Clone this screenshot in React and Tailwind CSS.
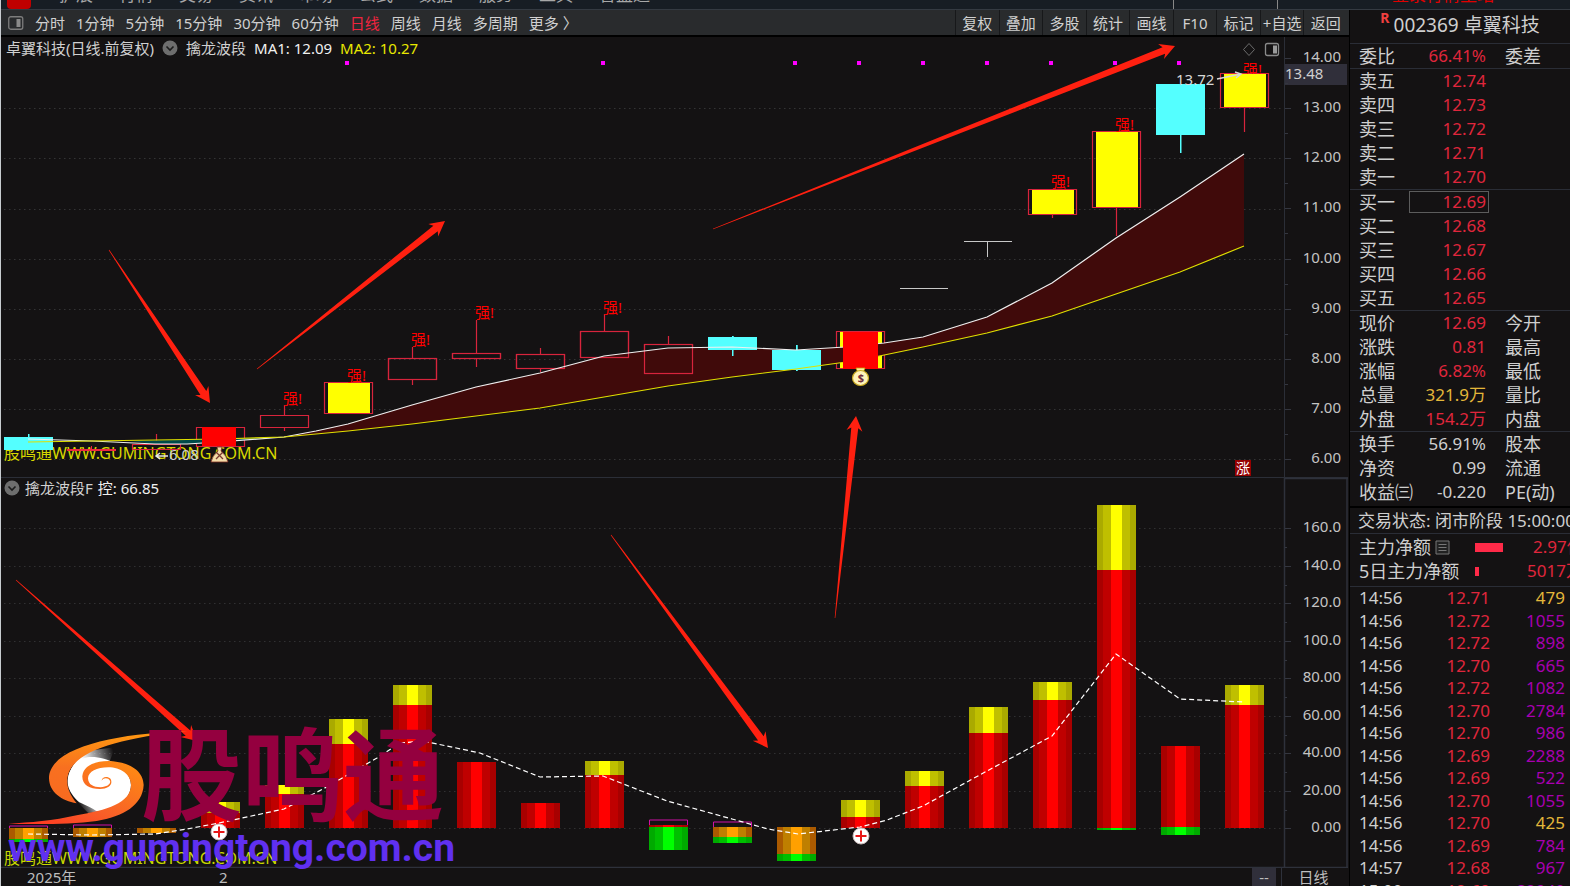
const FONT = "font-['Noto_Sans','Noto_Sans_CJK_SC',sans-serif]";

const menuItems = ["扩展", "行情", "交易", "资讯", "市场", "公式", "数据", "服务", "工具", "智盈通"];

const periods = ["分时", "1分钟", "5分钟", "15分钟", "30分钟", "60分钟", "日线", "周线", "月线", "多周期", "更多 〉"];

const actions = ["复权", "叠加", "多股", "统计", "画线", "F10", "标记", "+自选", "返回"];

const sells = [
  ["卖五", "12.74"],
  ["卖四", "12.73"],
  ["卖三", "12.72"],
  ["卖二", "12.71"],
  ["卖一", "12.70"],
];

const buys = [
  ["买一", "12.69"],
  ["买二", "12.68"],
  ["买三", "12.67"],
  ["买四", "12.66"],
  ["买五", "12.65"],
];

const quotes = [
  ["现价", "12.69", "今开", "text-[#e0263c]"],
  ["涨跌", "0.81", "最高", "text-[#e0263c]"],
  ["涨幅", "6.82%", "最低", "text-[#e0263c]"],
  ["总量", "321.9万", "量比", "text-[#e3b73a]"],
  ["外盘", "154.2万", "内盘", "text-[#e0263c]"],
];

const basics = [
  ["换手", "56.91%", "股本"],
  ["净资", "0.99", "流通"],
  ["收益㈢", "-0.220", "PE(动)"],
];

const ticks = [
  ["14:56", "12.71", "479"],
  ["14:56", "12.72", "1055"],
  ["14:56", "12.72", "898"],
  ["14:56", "12.70", "665"],
  ["14:56", "12.72", "1082"],
  ["14:56", "12.70", "2784"],
  ["14:56", "12.70", "986"],
  ["14:56", "12.69", "2288"],
  ["14:56", "12.69", "522"],
  ["14:56", "12.70", "1055"],
  ["14:56", "12.70", "425"],
  ["14:56", "12.69", "784"],
  ["14:57", "12.68", "967"],
  ["15:00", "12.69", "32940"],
];

const STEP = 64;
const center = (i) => 28 + STEP * i;

// kind, body top, body bottom, wick top, wick bottom
const candles = [
  ["down", 437, 450, 434, 450],
  ["flat", 450, 451, 446, 451],
  ["up", 444, 449, 434, 449],
  ["red", 427, 446, 427, 446],
  ["up", 415, 427, 405, 431],
  ["strong", 382, 413, 382, 413],
  ["up", 358, 379, 347, 385],
  ["up", 353, 358, 320, 367],
  ["up", 354, 368, 348, 372],
  ["up", 331, 357, 314, 370],
  ["up", 344, 373, 336, 373],
  ["down", 337, 350, 336, 356],
  ["down", 350, 370, 345, 371],
  ["signal", 331, 368, 331, 368],
  ["line", 288, 288, 288, 288],
  ["line", 241, 241, 241, 257],
  ["strong", 189, 214, 189, 218],
  ["strong", 131, 207, 131, 236],
  ["down", 84, 135, 84, 153],
  ["strong", 73, 107, 73, 132],
];

const marks = [[4, 399], [5, 376], [6, 340], [7, 313], [9, 308], [16, 182], [17, 125], [19, 70]];
const dots = [5, 9, 12, 13, 14, 15, 16, 17, 18];

const ma1 =
  "28,439 92,441 155,444 187,444 219,442 284,437 316,431 348,424 412,405 476,387 540,373 604,356 668,348 732,347 796,350 845,347 884,343 923,337 987,317 1052,283 1116,238 1180,197 1244,154";
const ma2 =
  "28,442 155,440 219,439 284,437 348,431 412,424 476,416 540,408 604,397 668,386 732,377 796,369 860,360 923,347 987,333 1052,316 1116,294 1180,272 1244,246";
const band = ma1.split(" ").slice(5).concat(ma2.split(" ").slice(3).reverse()).join(" ");

// stacked pieces: [tone, top, bottom]
const bars = [
  [["magenta", 826, 828], ["orange", 828, 839], ["green", 839, 842]],
  [["magenta", 825, 828], ["orange", 828, 837]],
  [["orange", 828, 833]],
  [["yellow", 802, 813], ["red", 813, 828]],
  [["yellow", 785, 794], ["red", 794, 828]],
  [["yellow", 719, 744], ["red", 744, 828]],
  [["yellow", 685, 705], ["red", 705, 828]],
  [["red", 762, 828]],
  [["red", 803, 828]],
  [["yellow", 761, 775], ["red", 775, 828]],
  [["magenta", 820, 825], ["red", 825, 827], ["green", 827, 850]],
  [["magenta", 822, 827], ["orange", 827, 837], ["green", 837, 843]],
  [["orange", 827, 854], ["green", 854, 861]],
  [["yellow", 800, 817], ["red", 817, 828]],
  [["yellow", 771, 786], ["red", 786, 828]],
  [["yellow", 707, 733], ["red", 733, 828]],
  [["yellow", 682, 700], ["red", 700, 828]],
  [["yellow", 505, 570], ["red", 570, 828], ["green", 828, 830]],
  [["red", 746, 827], ["green", 827, 835]],
  [["yellow", 685, 705], ["red", 705, 828]],
];

const tones = {
  red: ["#a80000", "#bf0000", "#ff0000"],
  yellow: ["#aaaa00", "#bfbf00", "#ffff00"],
  orange: ["#ab5a00", "#bf7f00", "#ffa000"],
  green: ["#00aa00", "#00bf00", "#00ff00"],
};

const control =
  "28,834 92,835 155,834 187,829 219,823 284,809 323,789 377,758 400,743 423,741 480,753 540,777 603,776 667,801 732,819 768,829 798,834 860,827 887,820 923,806 987,771 1052,736 1116,654 1180,699 1244,702";

function Candle({ i, data }) {
  const [kind, top, bottom, high, low] = data;
  const x = center(i);
  const h = bottom - top;
  if (kind === "line") {
    return <path d={`M${x - 24} ${top + 0.5}h48M${x - 0.5} ${top}V${low}`} stroke="#c8c8c8" fill="none" />;
  }
  if (kind === "flat") {
    return (
      <g fill="#f0283f">
        <rect x={x - 25} y={top - 1} width="49" height="2" />
        <rect x={x - 1} y={high} width="1" height="5" />
      </g>
    );
  }
  if (kind === "down") {
    return (
      <g fill="#54ffff">
        <rect x={x - 24} y={top} width="49" height={h} />
        <rect x={x} y={high} width="1.5" height={low - high} />
      </g>
    );
  }
  return (
    <g>
      <path
        d={`M${x + 0.5} ${high}V${top}M${x + 0.5} ${bottom}V${low}M${x - 23.5} ${top + 0.5}h48v${h}h-48z`}
        fill="none"
        stroke="#d8243c"
        strokeWidth="1.2"
      />
      {(kind === "strong" || kind === "signal") && (
        <rect x={x - 20} y={top + 1} width="42" height={h - 1} fill="#ffff00" />
      )}
    </g>
  );
}

function Bar({ i, parts }) {
  const x = center(i) - 19;
  return parts.map(([tone, top, bottom]) => {
    const h = bottom - top;
    if (tone === "magenta") {
      return <path key={tone} d={`M${x + 0.5} ${bottom}v${-h}h38v${h}`} fill="none" stroke="#d010a8" />;
    }
    const [edge, mid, core] = tones[tone];
    return (
      <g key={tone}>
        <rect x={x} y={top} width="39" height={h} fill={edge} />
        <rect x={x + 6} y={top} width="27" height={h} fill={mid} />
        <rect x={x + 14} y={top} width="11" height={h} fill={core} />
      </g>
    );
  });
}

function Arrow({ from, to }) {
  const dx = to[0] - from[0];
  const dy = to[1] - from[1];
  const len = Math.hypot(dx, dy);
  const angle = (Math.atan2(dy, dx) * 180) / Math.PI;
  return (
    <path
      transform={`translate(${from[0]} ${from[1]}) rotate(${angle})`}
      d={`M0 -0.3L${len - 12} -3.5L${len - 15} -8L${len} 0L${len - 15} 8L${len - 12} 3.5L0 0.3z`}
      fill="#ff2010"
    />
  );
}

function Chevron() {
  return (
    <svg viewBox="0 0 16 16" className="size-4 shrink-0">
      <circle cx="8" cy="8" r="7.5" fill="#6e6e6e" />
      <path d="M4.5 6.5L8 10l3.500-3.500" fill="none" stroke="#1c1c1c" strokeWidth="1.6" />
    </svg>
  );
}

function PanelIcon() {
  return (
    <svg viewBox="0 0 16 14" className="h-3.5 w-4 shrink-0">
      <rect x="0.750" y="0.750" width="14" height="12.500" rx="2" fill="none" stroke="#7c7c7c" strokeWidth="1.3" />
      <rect x="8.500" y="3" width="4" height="8" fill="#8a8a8a" />
    </svg>
  );
}

function PriceChart() {
  return (
    <svg viewBox="1 37 1348 441" className="block h-auto w-full">
      {[108, 158, 209, 259, 309, 359, 409, 459].map((y) => (
        <path key={y} d={`M4 ${y + 0.5}H1282`} stroke="#343436" strokeDasharray="1.5 3.5" />
      ))}
      {dots.map((i) => (
        <rect key={i} x={center(i) - 3} y="61" width="4" height="4" fill="#ff00ff" />
      ))}
      <text x="4" y="459" fontSize="16" fill="#d8d800">股鸣通WWW.GUMINGTONG.COM.CN</text>
      {candles.map((c, i) => (
        <Candle key={i} i={i} data={c} />
      ))}
      <polygon points="130,441 219,439 284,437 219,442 187,444 155,444" fill="#004a4a" />
      <polygon points={band} fill="#400a0a" />
      {[6, 7, 8, 9, 10].map((i) => (
        <rect
          key={i}
          x={center(i) - 23.5}
          y={candles[i][1] + 0.5}
          width="48"
          height={candles[i][2] - candles[i][1]}
          fill="none"
          stroke="#d8243c"
          strokeWidth="1.2"
        />
      ))}
      {[11, 12].map((i) => (
        <Candle key={i} i={i} data={candles[i]} />
      ))}
      <polyline points={ma1} fill="none" stroke="#f0f0f0" strokeWidth="1.2" />
      <polyline points={ma2} fill="none" stroke="#e0e000" strokeWidth="1.2" />
      <rect x="202" y="427" width="34" height="19" fill="#ff0000" />
      <rect x="843" y="332" width="35" height="37" fill="#ff0000" />

      {marks.map(([i, y]) => (
        <text key={i} x={center(i) - 1} y={y + 5} fontSize="15" fill="#ff0000">强!</text>
      ))}
      <rect x="1224" y="74" width="42" height="33" fill="#ffff00" />

      <text x="169" y="460" fontSize="15" fill="#d0d0d0">6.08</text>
      <path d="M168 456h-12m4-3l-4 3l4 3" fill="none" stroke="#e8e8e8" strokeWidth="1.5" />
      <text x="1176" y="85" fontSize="15" fill="#d8d8d8">13.72</text>
      <path d="M1217 79l24-5m-6-2l6 2l-5 4" fill="none" stroke="#d8d8d8" strokeWidth="1.5" />

      <path d="M217 447h5l-1 4q6 5 7 11h-17q1-6 7-11z" fill="#f3dca8" stroke="#7a2c20" strokeWidth="0.8" />
      <path d="M216 452l7 7m0-7l-7 7" stroke="#7a3a30" strokeWidth="1.3" />
      <path d="M856 368h9l-2 5h-5z" fill="#fff4a0" stroke="#c8a000" strokeWidth="0.8" />
      <ellipse cx="860.500" cy="378" rx="8" ry="7.500" fill="#fff3b8" stroke="#c8a820" strokeWidth="1.2" />
      <text x="861" y="382" fontSize="11" fontWeight="700" textAnchor="middle" fill="#6e2a3a">$</text>

      <rect x="1235" y="460" width="16" height="16" fill="#960000" />
      <text x="1243" y="473" fontSize="14" textAnchor="middle" fill="#ffffff">涨</text>

      <path d="M1249 43.500l5.500 6l-5.500 6l-5.500-6z" fill="none" stroke="#6c6c6c" />
      <rect x="1265.500" y="43.500" width="13" height="12" rx="2" fill="none" stroke="#8a8a8a" strokeWidth="1.3" />
      <rect x="1273" y="45.500" width="4" height="8" fill="#9a9a9a" />

      <rect x="1285" y="64" width="62" height="21" fill="#302f3a" />
      <path d="M1284.500 37V478M1 477.500H1348" stroke="#2b2e37" />
      {[14, 13, 12, 11, 10, 9, 8, 7, 6].map((p, k) => {
        const y = 58 + Math.round(50.15 * k);
        return (
          <g key={p}>
            <path d={`M1285 ${y + 0.5}h6${p > 6 ? "m-6 25h3" : ""}`} stroke="#34363f" />
            <text x="1341" y={y + 4} fontSize="15" textAnchor="end" fill="#c4c4c4">{p.toFixed(2)}</text>
          </g>
        );
      })}
      <text x="1285" y="79" fontSize="15" fill="#d0d0d0">13.48</text>
    </svg>
  );
}

function ControlChart() {
  const labels = ["160.0", "140.0", "120.0", "100.0", "80.00", "60.00", "40.00", "20.00", "0.00"];
  const levels = labels.map((label, k) => [label, 528 + Math.round(37.54 * k)]);
  return (
    <svg viewBox="1 478 1348 390" className="block h-auto w-full">
      {levels.map(([label, y]) => (
        <path key={label} d={`M4 ${y + 0.5}H1282`} stroke="#303032" strokeDasharray="1.5 3.5" />
      ))}
      {bars.map((parts, i) => (
        <Bar key={i} i={i} parts={parts} />
      ))}
      <polyline points={control} fill="none" stroke="#ffffff" strokeWidth="1.2" strokeDasharray="5 3" />
      <text x="4" y="864" fontSize="16" fill="#c8d800">股鸣通WWW.GUMINGTONG.COM.CN</text>
      {[[219, 832], [861, 836]].map(([x, y]) => (
        <g key={x}>
          <circle cx={x} cy={y} r="8" fill="#ffffff" stroke="#c8b8b8" />
          <path d={`M${x - 5.5} ${y}h11M${x} ${y - 5.5}v11`} stroke="#e81818" strokeWidth="2" />
        </g>
      ))}
      <path d="M1284.500 478V868M1347 478V868M1 867.500H1348M1284 478.500H1348" stroke="#2e313b" strokeWidth="1.500" />
      {levels.map(([label, y]) => (
        <g key={label}>
          <path d={`M1285 ${y + 0.5}h6${label === "0.00" ? "" : "m-6 19h2"}`} stroke="#34363f" />
          <text x="1341" y={y + 4} fontSize="15" textAnchor="end" fill="#c4c4c4">{label}</text>
        </g>
      ))}
    </svg>
  );
}

function Overlay() {
  return (
    <svg viewBox="1 37 1348 849" className="pointer-events-none absolute inset-x-0 top-0 block h-auto w-full">
      <defs>
        <linearGradient id="swirl" x1="0" y1="0" x2="0" y2="1">
          <stop offset="0" stopColor="#ff9a10" />
          <stop offset="0.500" stopColor="#f87020" />
          <stop offset="1" stopColor="#f86a20" />
        </linearGradient>
        <linearGradient id="tail" x1="0" y1="1" x2="1" y2="0">
          <stop offset="0" stopColor="#ff3020" />
          <stop offset="0.450" stopColor="#f86028" />
          <stop offset="1" stopColor="#ff9010" />
        </linearGradient>
        <linearGradient id="fadeTop" x1="0" y1="0.500" x2="1" y2="0.300">
          <stop offset="0.300" stopColor="#ffffff" />
          <stop offset="1" stopColor="#ffffff" stopOpacity="0" />
        </linearGradient>
        <linearGradient id="fadeBottom" x1="1" y1="0" x2="0" y2="0.300">
          <stop offset="0.300" stopColor="#ffffff" />
          <stop offset="1" stopColor="#ffffff" stopOpacity="0" />
        </linearGradient>
      </defs>
      <Arrow from={[109, 250]} to={[210, 403]} />
      <Arrow from={[257, 369]} to={[445, 221]} />
      <Arrow from={[713, 229]} to={[1175, 46]} />
      <Arrow from={[835, 618]} to={[856, 416]} />
      <Arrow from={[611, 535]} to={[768, 748]} />
      <Arrow from={[16, 580]} to={[197, 741]} />

      <g transform="translate(0 670) scale(0.33333)">
        <path d="M205 320C215 280 240 255 280 240L345 232L325 285L240 320z" fill="url(#fadeTop)" />
        <path d="M232 396L300 380L320 420L265 430z" fill="url(#fadeBottom)" />
        <path
          d="M203 330C206 295 230 270 262 262C310 255 393 290 393 345C392 390 350 415 290 424C262 404 238 402 228 388C208 365 202 350 203 330z"
          fill="#ffffff"
        />
        <path
          d="M562 184C380 188 147 225 147 325C148 368 185 392 230 400C208 372 200 350 202 325C210 250 340 205 562 184z"
          fill="url(#swirl)"
        />
        <path
          d="M25 461C90 458 160 452 230 436C320 420 392 400 393 345C392 312 362 292 325 292C290 292 265 305 264 325C265 344 280 352 302 352C322 350 333 342 330 332C325 322 310 322 305 332C306 320 322 317 332 327C340 345 325 357 300 357C268 357 246 345 247 318C250 290 280 273 325 273C385 275 430 300 431 345C428 405 370 440 290 453C210 464 100 463 25 461z"
          fill="url(#tail)"
        />
      </g>
      <text x="141" y="813" fontSize="101" fontWeight="700" fill="#94003f">股鸣通</text>
      <text x="8" y="861" fontSize="39" fontWeight="700" fill="#6030f0" className="font-[Roboto,'Liberation_Sans',sans-serif]">
        www.gumingtong.com.cn
      </text>
    </svg>
  );
}

function BookRow({ label, price, boxed }) {
  return (
    <tr className="h-6">
      <th scope="row" className="w-[50px] text-lg leading-6 font-normal text-left">{label}</th>
      <td className="w-20">
        <div className={boxed ? "h-[22px] leading-[20px] border border-[#5c5c5c] pr-0.5 text-right" : "pr-[3px] text-right"}>
          {price}
        </div>
      </td>
      <td />
    </tr>
  );
}

function InfoRow({ label, value, other, tone = "" }) {
  return (
    <tr className="h-6">
      <th scope="row" className="w-[50px] overflow-visible text-lg leading-6 font-normal text-left">{label}</th>
      <td className={`w-20 pr-[3px] text-right ${tone}`}>{value}</td>
      <th scope="row" className="pl-4 text-lg leading-6 font-normal text-left">{other}</th>
    </tr>
  );
}

function QuotePanel() {
  const table = "w-full table-fixed whitespace-nowrap";
  const block = "border-t border-[#2a2d36] pl-[9px]";
  return (
    <aside className="w-[221px] shrink-0 overflow-hidden border-l border-black bg-[#141213] text-[17px] leading-6 text-[#cfcfcf]">
      <h1 className="flex h-[33px] items-center justify-center whitespace-nowrap pb-1 text-[19px]">
        <sup className="mr-1 text-sm font-bold text-[#f04040]">R</sup>
        002369 卓翼科技
      </h1>
      <div className={block}>
        <table className={table}>
          <tbody>
            <InfoRow label="委比" value="66.41%" other="委差" tone="text-[#e0263c]" />
          </tbody>
        </table>
      </div>
      <div className={`${block} text-[#e0263c]`}>
        <table className={`${table} [&_th]:text-[#cfcfcf]`}>
          <tbody>
            {sells.map(([label, price]) => (
              <BookRow key={label} label={label} price={price} />
            ))}
          </tbody>
        </table>
      </div>
      <div className={`${block} text-[#e0263c]`}>
        <table className={`${table} [&_th]:text-[#cfcfcf]`}>
          <tbody>
            {buys.map(([label, price], i) => (
              <BookRow key={label} label={label} price={price} boxed={i === 0} />
            ))}
          </tbody>
        </table>
      </div>
      <div className={block}>
        <table className={table}>
          <tbody>
            {quotes.map(([label, value, other, tone]) => (
              <InfoRow key={label} label={label} value={value} other={other} tone={tone} />
            ))}
          </tbody>
        </table>
      </div>
      <div className={`${block} pb-0.5`}>
        <table className={table}>
          <tbody>
            {basics.map(([label, value, other]) => (
              <InfoRow key={label} label={label} value={value} other={other} />
            ))}
          </tbody>
        </table>
      </div>
      <p className="whitespace-nowrap border-t-2 border-black pt-px pl-2">交易状态: 闭市阶段 15:00:00</p>
      <div className={`${block} pt-px pb-[3px]`}>
        <div className="flex items-center whitespace-nowrap">
          <span className="flex w-[116px] shrink-0 items-center gap-1 text-lg leading-6">
            主力净额
            <svg viewBox="0 0 15 15" className="size-[15px]">
              <path d="M1 1h13v13H1zM3.500 4.500h8M3.500 7.500h8M3.500 10.500h8" fill="#222" stroke="#777" />
            </svg>
          </span>
          <span className="h-[9px] w-7 shrink-0 bg-[#ff2a48]" />
          <span className="ml-[30px] text-[#e0263c]">2.97亿</span>
        </div>
        <div className="flex items-center whitespace-nowrap">
          <span className="w-[116px] shrink-0 text-lg leading-6">5日主力净额</span>
          <span className="h-[9px] w-1 shrink-0 bg-[#ff2a48]" />
          <span className="ml-12 text-[#e0263c]">5017万</span>
        </div>
      </div>
      <div className="border-t border-[#2a2d36] pl-[9px] pr-[5px]">
        <table className="h-[315px] w-full leading-5">
          <tbody>
            {ticks.map(([time, price, volume], i) => (
              <tr key={i}>
                <td>{time}</td>
                <td className="text-right text-[#e0263c]">{price}</td>
                <td className={`w-[75px] text-right ${volume.length === 3 && volume < "480" ? "text-[#e3b73a]" : "text-[#a800b0]"}`}>
                  {volume}
                </td>
              </tr>
            ))}
          </tbody>
        </table>
      </div>
    </aside>
  );
}

export default function App() {
  return (
    <div className={`flex h-screen flex-col overflow-hidden border-l border-[#c8ccd0] bg-[#141213] text-[#d0d0d0] ${FONT}`}>
      <nav className="flex h-2.5 shrink-0 items-end overflow-hidden border-b border-[#343a42] bg-[#171d24] text-[17px] leading-7">
        <span className="ml-1.5 h-2.5 w-6 shrink-0 rounded-b bg-[#c00000]" />
        <div className="ml-7 flex gap-[26px] whitespace-nowrap text-[#a8a8a8]">
          {menuItems.map((item) => (
            <a key={item} href="#menu">{item}</a>
          ))}
        </div>
        <span className="ml-auto h-2.5 w-px bg-[#888]" />
        <span className="ml-[103px] h-2.5 w-px bg-[#888]" />
        <a href="#login" className="ml-[114px] mr-[76px] whitespace-nowrap text-[#e00000]">登录行情主站</a>
      </nav>

      <div className="flex min-h-0 flex-1">
        <main className="flex min-w-0 flex-1 flex-col">
          <div className="flex h-[27px] shrink-0 items-center justify-between border-b-2 border-black bg-[#292b2d] text-[15px] leading-5">
            <div className="flex items-center gap-[11px] whitespace-nowrap pl-[7px]">
              <PanelIcon />
              {periods.map((p) => (
                <button key={p} className={p === "日线" ? "text-[#f0243f]" : ""}>{p}</button>
              ))}
            </div>
            <div className="grid h-full w-[394px] grid-cols-9 pr-0.5">
              {actions.map((a) => (
                <button key={a} className="whitespace-nowrap border-l border-[#17181a]">{a}</button>
              ))}
            </div>
          </div>

          <div className="relative">
            <section className="relative">
              <PriceChart />
              <header className="absolute left-[5px] top-px flex items-center gap-2 whitespace-nowrap text-[15px] leading-5">
                <h2>卓翼科技(日线.前复权)</h2>
                <Chevron />
                <span>擒龙波段</span>
                <span className="text-[#f0f0f0]">MA1: 12.09</span>
                <span className="text-[#e8e800]">MA2: 10.27</span>
              </header>
            </section>
            <section className="relative">
              <ControlChart />
              <header className="absolute left-[3px] top-0 flex items-center gap-[5px] whitespace-nowrap text-[15px] leading-5">
                <Chevron />
                <h2>擒龙波段F</h2>
                <span className="text-[#f0f0f0]">控: 66.85</span>
              </header>
            </section>
            <footer className="flex h-[18px] text-[15px] leading-[18px] text-[#bdbdbd]">
              <span className="w-[190px] pl-[26px]">2025年</span>
              <span className="flex-1 pl-7">2</span>
              <span className="w-6 bg-[#302f3a] text-center">--</span>
              <span className="ml-[5px] mr-1 w-16 border-l border-[#2e313b] text-center">日线</span>
            </footer>
            <Overlay />
          </div>
        </main>
        <QuotePanel />
      </div>
    </div>
  );
}
